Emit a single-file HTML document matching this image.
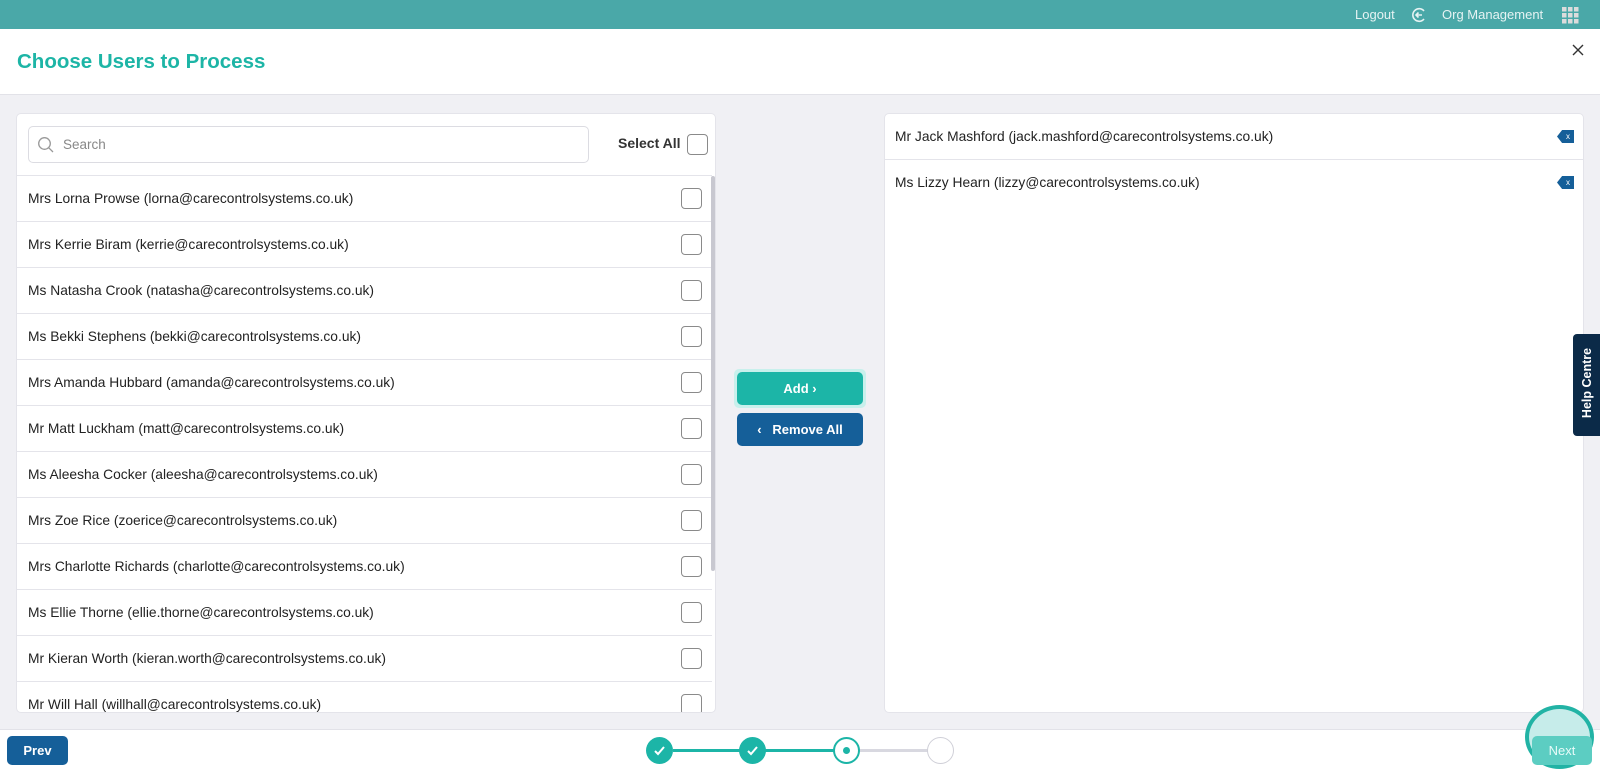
<!DOCTYPE html>
<html><head><meta charset="utf-8"><style>
*{box-sizing:border-box;margin:0;padding:0}
body{width:1600px;height:769px;overflow:hidden;background:#f0f0f4;font-family:"Liberation Sans",Arial,sans-serif;position:relative;color:#222}
.top{position:absolute;left:0;top:0;width:1600px;height:29px;background:#4aa8a8;color:#e6f3f3;font-size:13px}
.hdr{position:absolute;left:0;top:29px;width:1600px;height:66px;background:#fff;border-bottom:1px solid #e2e2e8}
.title{position:absolute;left:17px;top:21px;font-size:20.5px;font-weight:bold;color:#1db5a6}
.panel{position:absolute;background:#fff;border:1px solid #e4e4ea;border-radius:5px;overflow:hidden}
.row{position:absolute;left:0;width:695px;height:46px;border-top:1px solid #e4e4ea;font-size:13.8px;line-height:45px;padding-left:11px}
.cb{position:absolute;left:664px;top:12px;width:21px;height:21px;border:1px solid #8a8a8a;border-radius:4px}
.rrow{position:absolute;left:0;width:699px;height:46px;font-size:13.8px;padding-left:10px;line-height:45px}
.xb{position:absolute;right:10px;top:16px;width:17px;height:13px;background:#155f99;clip-path:polygon(30% 0,100% 0,100% 100%,30% 100%,0 50%);color:#fff;font-size:8px;line-height:13px;text-align:right;padding-right:4px}
.btn{position:absolute;border-radius:5px;color:#fff;font-size:13px;font-weight:bold;text-align:center}
.foot{position:absolute;left:0;top:729px;width:1600px;height:40px;background:#fff;border-top:1px solid #e2e2e8}
.dot{position:absolute;top:737px;width:27px;height:27px;border-radius:50%}
</style></head><body>
<div class="top">
<span style="position:absolute;left:1355px;top:7px">Logout</span>
<svg style="position:absolute;left:1411px;top:7px" width="16" height="16" viewBox="0 0 16 16"><path d="M13 4A6.3 6.3 0 1 0 13 12" fill="none" stroke="#e6f3f3" stroke-width="1.6"/><path d="M11 8H5M7.5 5.5L5 8l2.5 2.5" fill="none" stroke="#e6f3f3" stroke-width="1.6"/></svg>
<span style="position:absolute;left:1442px;top:7px">Org Management</span>
<svg style="position:absolute;left:1562px;top:7px" width="17" height="17" viewBox="0 0 17 17" fill="#dcdcdc"><rect x="0" y="0" width="4.5" height="4.5"/><rect x="6" y="0" width="4.5" height="4.5"/><rect x="12" y="0" width="4.5" height="4.5"/><rect x="0" y="6" width="4.5" height="4.5"/><rect x="6" y="6" width="4.5" height="4.5"/><rect x="12" y="6" width="4.5" height="4.5"/><rect x="0" y="12" width="4.5" height="4.5"/><rect x="6" y="12" width="4.5" height="4.5"/><rect x="12" y="12" width="4.5" height="4.5"/></svg>
</div>
<div class="hdr"><div class="title">Choose Users to Process</div>
<svg style="position:absolute;left:1572px;top:15px" width="12" height="12" viewBox="0 0 12 12"><path d="M1 1L11 11M11 1L1 11" stroke="#333" stroke-width="1.4"/></svg></div>

<div class="panel" style="left:16px;top:113px;width:700px;height:600px">
<div style="position:absolute;left:11px;top:12px;width:561px;height:37px;border:1px solid #dcdce2;border-radius:5px">
<svg style="position:absolute;left:8px;top:9px" width="18" height="18" viewBox="0 0 18 18"><circle cx="7.5" cy="7.5" r="5.8" fill="none" stroke="#999" stroke-width="1.3"/><path d="M11.8 11.8L16 16" stroke="#999" stroke-width="1.3"/></svg>
<span style="position:absolute;left:34px;top:10px;font-size:13.5px;color:#888">Search</span></div>
<span style="position:absolute;left:601px;top:21px;font-size:14px;font-weight:bold;color:#333">Select All</span>
<div style="position:absolute;left:670px;top:20px;width:21px;height:21px;border:1px solid #8a8a8a;border-radius:4px"></div>
<div class="row" style="top:61px">Mrs Lorna Prowse (lorna@carecontrolsystems.co.uk)<div class="cb"></div></div>
<div class="row" style="top:107px">Mrs Kerrie Biram (kerrie@carecontrolsystems.co.uk)<div class="cb"></div></div>
<div class="row" style="top:153px">Ms Natasha Crook (natasha@carecontrolsystems.co.uk)<div class="cb"></div></div>
<div class="row" style="top:199px">Ms Bekki Stephens (bekki@carecontrolsystems.co.uk)<div class="cb"></div></div>
<div class="row" style="top:245px">Mrs Amanda Hubbard (amanda@carecontrolsystems.co.uk)<div class="cb"></div></div>
<div class="row" style="top:291px">Mr Matt Luckham (matt@carecontrolsystems.co.uk)<div class="cb"></div></div>
<div class="row" style="top:337px">Ms Aleesha Cocker (aleesha@carecontrolsystems.co.uk)<div class="cb"></div></div>
<div class="row" style="top:383px">Mrs Zoe Rice (zoerice@carecontrolsystems.co.uk)<div class="cb"></div></div>
<div class="row" style="top:429px">Mrs Charlotte Richards (charlotte@carecontrolsystems.co.uk)<div class="cb"></div></div>
<div class="row" style="top:475px">Ms Ellie Thorne (ellie.thorne@carecontrolsystems.co.uk)<div class="cb"></div></div>
<div class="row" style="top:521px">Mr Kieran Worth (kieran.worth@carecontrolsystems.co.uk)<div class="cb"></div></div>
<div class="row" style="top:567px">Mr Will Hall (willhall@carecontrolsystems.co.uk)<div class="cb"></div></div>
<div style="position:absolute;left:694px;top:62px;width:4px;height:395px;background:#c8c8d0;border-radius:2px"></div>
</div>

<div class="btn" style="left:734px;top:369px;width:132px;height:39px;background:#c8f0ec"></div>
<div class="btn" style="left:737px;top:372px;width:126px;height:33px;background:#1cb5a7;line-height:33px">Add &#8250;</div>
<div class="btn" style="left:737px;top:413px;width:126px;height:33px;background:#155f99;line-height:33px">&#8249;&nbsp;&nbsp; Remove All</div>

<div class="panel" style="left:884px;top:113px;width:700px;height:600px">
<div class="rrow" style="top:0;border-bottom:1px solid #e4e4ea">Mr Jack Mashford (jack.mashford@carecontrolsystems.co.uk)<div class="xb">x</div></div>
<div class="rrow" style="top:46px">Ms Lizzy Hearn (lizzy@carecontrolsystems.co.uk)<div class="xb">x</div></div>
</div>

<div style="position:absolute;left:1573px;top:334px;width:27px;height:102px;background:#0b2a48;border-radius:4px 0 0 4px">
<span style="position:absolute;left:-25px;top:42px;width:78px;transform:rotate(-90deg);color:#fff;font-size:12.5px;font-weight:bold;text-align:center;white-space:nowrap">Help Centre</span></div>

<div class="foot"></div>
<div class="btn" style="left:7px;top:736px;width:61px;height:29px;background:#155f99;line-height:29px">Prev</div>
<div style="position:absolute;left:673px;top:749px;width:266px;height:3px;background:#d8d8e0"></div>
<div style="position:absolute;left:673px;top:749px;width:173px;height:3px;background:#1cb5a7"></div>
<div class="dot" style="left:646px;background:#1cb5a7"><svg width="27" height="27" viewBox="0 0 27 27"><path d="M9 14l3 3 6-7" fill="none" stroke="#fff" stroke-width="2"/></svg></div>
<div class="dot" style="left:739px;background:#1cb5a7"><svg width="27" height="27" viewBox="0 0 27 27"><path d="M9 14l3 3 6-7" fill="none" stroke="#fff" stroke-width="2"/></svg></div>
<div class="dot" style="left:833px;background:#fff;border:2px solid #1cb5a7"><div style="position:absolute;left:8px;top:8px;width:7px;height:7px;border-radius:50%;background:#1cb5a7"></div></div>
<div class="dot" style="left:927px;background:#fff;border:1.5px solid #d0d0d8"></div>
<div style="position:absolute;left:1525px;top:705px;width:69px;height:64px;border-radius:50%;border:4px solid #22b3a5;background:#c6ecea"></div>
<div class="btn" style="left:1532px;top:736px;width:60px;height:29px;background:#5ccdc2;line-height:29px;color:#e8fbf9;font-weight:normal">Next</div>
</body></html>
